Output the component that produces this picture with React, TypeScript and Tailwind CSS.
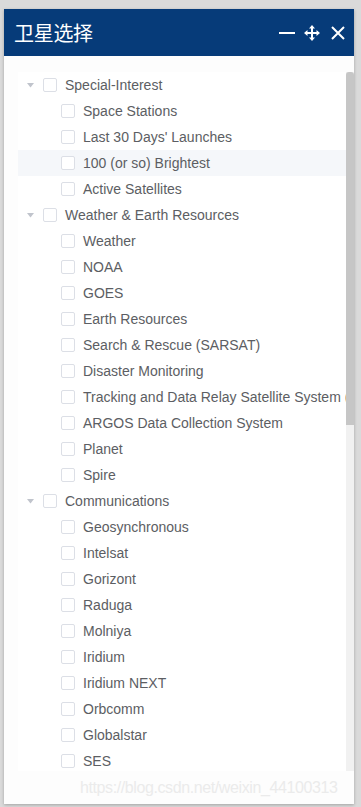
import React from "react"

type Group = { label: string; children: string[]; highlight?: string }

const groups: Group[] = [
  {
    label: "Special-Interest",
    children: ["Space Stations", "Last 30 Days' Launches", "100 (or so) Brightest", "Active Satellites"],
    highlight: "100 (or so) Brightest",
  },
  {
    label: "Weather & Earth Resources",
    children: [
      "Weather",
      "NOAA",
      "GOES",
      "Earth Resources",
      "Search & Rescue (SARSAT)",
      "Disaster Monitoring",
      "Tracking and Data Relay Satellite System (TDRSS)",
      "ARGOS Data Collection System",
      "Planet",
      "Spire",
    ],
  },
  {
    label: "Communications",
    children: [
      "Geosynchronous",
      "Intelsat",
      "Gorizont",
      "Raduga",
      "Molniya",
      "Iridium",
      "Iridium NEXT",
      "Orbcomm",
      "Globalstar",
      "SES",
    ],
  },
]

function Checkbox() {
  return <span className="inline-block w-[14px] h-[14px] shrink-0 rounded-[2px] border border-[#dcdfe6] bg-white" />
}

function Row({ label, level, expandable, active }: { label: string; level: number; expandable?: boolean; active?: boolean }) {
  return (
    <div className={`flex items-center h-[26px] whitespace-nowrap ${active ? "bg-[#f5f7fa]" : ""}`} style={{ paddingLeft: level * 18 }}>
      <span className="w-[24px] h-[26px] shrink-0 flex items-center justify-center">
        {expandable && (
          <svg width="7" height="5" viewBox="0 0 7 5">
            <path d="M0 0 L7 0 L3.5 4.5 Z" fill="#c0c4cc" />
          </svg>
        )}
      </span>
      <span className="ml-px mr-[8px] flex">
        <Checkbox />
      </span>
      <span className="text-[14px] text-[#5c5e63]">{label}</span>
    </div>
  )
}

export default function App() {
  return (
    <div className="w-[361px] h-[807px] bg-[#dadada] pt-[9px] pl-[4px] pr-[7px] pb-[3px] font-['Liberation_Sans','Noto_Sans_CJK_SC',sans-serif]">
      <div className="h-full flex flex-col bg-[#fdfdfd] shadow-[0_1px_3px_rgba(0,0,0,0.25)]">
        {/* header */}
        <div className="h-[47px] shrink-0 bg-[#063b79] flex items-center pl-[10px] pr-[9px]">
          <span className="text-white text-[20px] font-['Noto_Sans_CJK_SC',sans-serif] tracking-[-0.3px]">卫星选择</span>
          <div className="ml-auto flex items-center gap-[8px]">
            <svg width="16" height="16" viewBox="0 0 16 16">
              <path d="M0 8 H16" stroke="white" strokeWidth="2" />
            </svg>
            <svg width="18" height="18" viewBox="0 0 18 18" fill="white">
              <path d="M9 1 L12 4.5 H6 Z M9 17 L12 13.5 H6 Z M1 9 L4.5 6 V12 Z M17 9 L13.5 6 V12 Z" />
              <path d="M9 4 V14 M4 9 H14" stroke="white" strokeWidth="2" />
            </svg>
            <svg width="14" height="14" viewBox="0 0 14 14" className="ml-[2px]">
              <path d="M1 1 L13 13 M13 1 L1 13" stroke="white" strokeWidth="2" />
            </svg>
          </div>
        </div>

        {/* tree */}
        <div className="flex pt-[16px] pl-[14px] h-[715px] shrink-0">
          <div className="flex-1 min-w-0 overflow-hidden bg-white">
            {groups.map((g) => (
              <div key={g.label}>
                <Row label={g.label} level={0} expandable />
                {g.children.map((c) => (
                  <Row key={c} label={c} level={1} active={c === g.highlight} />
                ))}
              </div>
            ))}
          </div>
          <div className="w-[8px] shrink-0 bg-[#f1f1f1] flex flex-col">
            <div className="h-[353px] bg-[#c6c6c6] rounded-t-[3px]" />
          </div>
        </div>

        {/* watermark */}
        <div className="flex-1 flex items-center pl-[76px] overflow-hidden">
          <span className="text-[16px] text-[#ebebeb] tracking-[-0.4px] whitespace-nowrap">
            https://blog.csdn.net/weixin_44100313
          </span>
        </div>
      </div>
    </div>
  )
}
